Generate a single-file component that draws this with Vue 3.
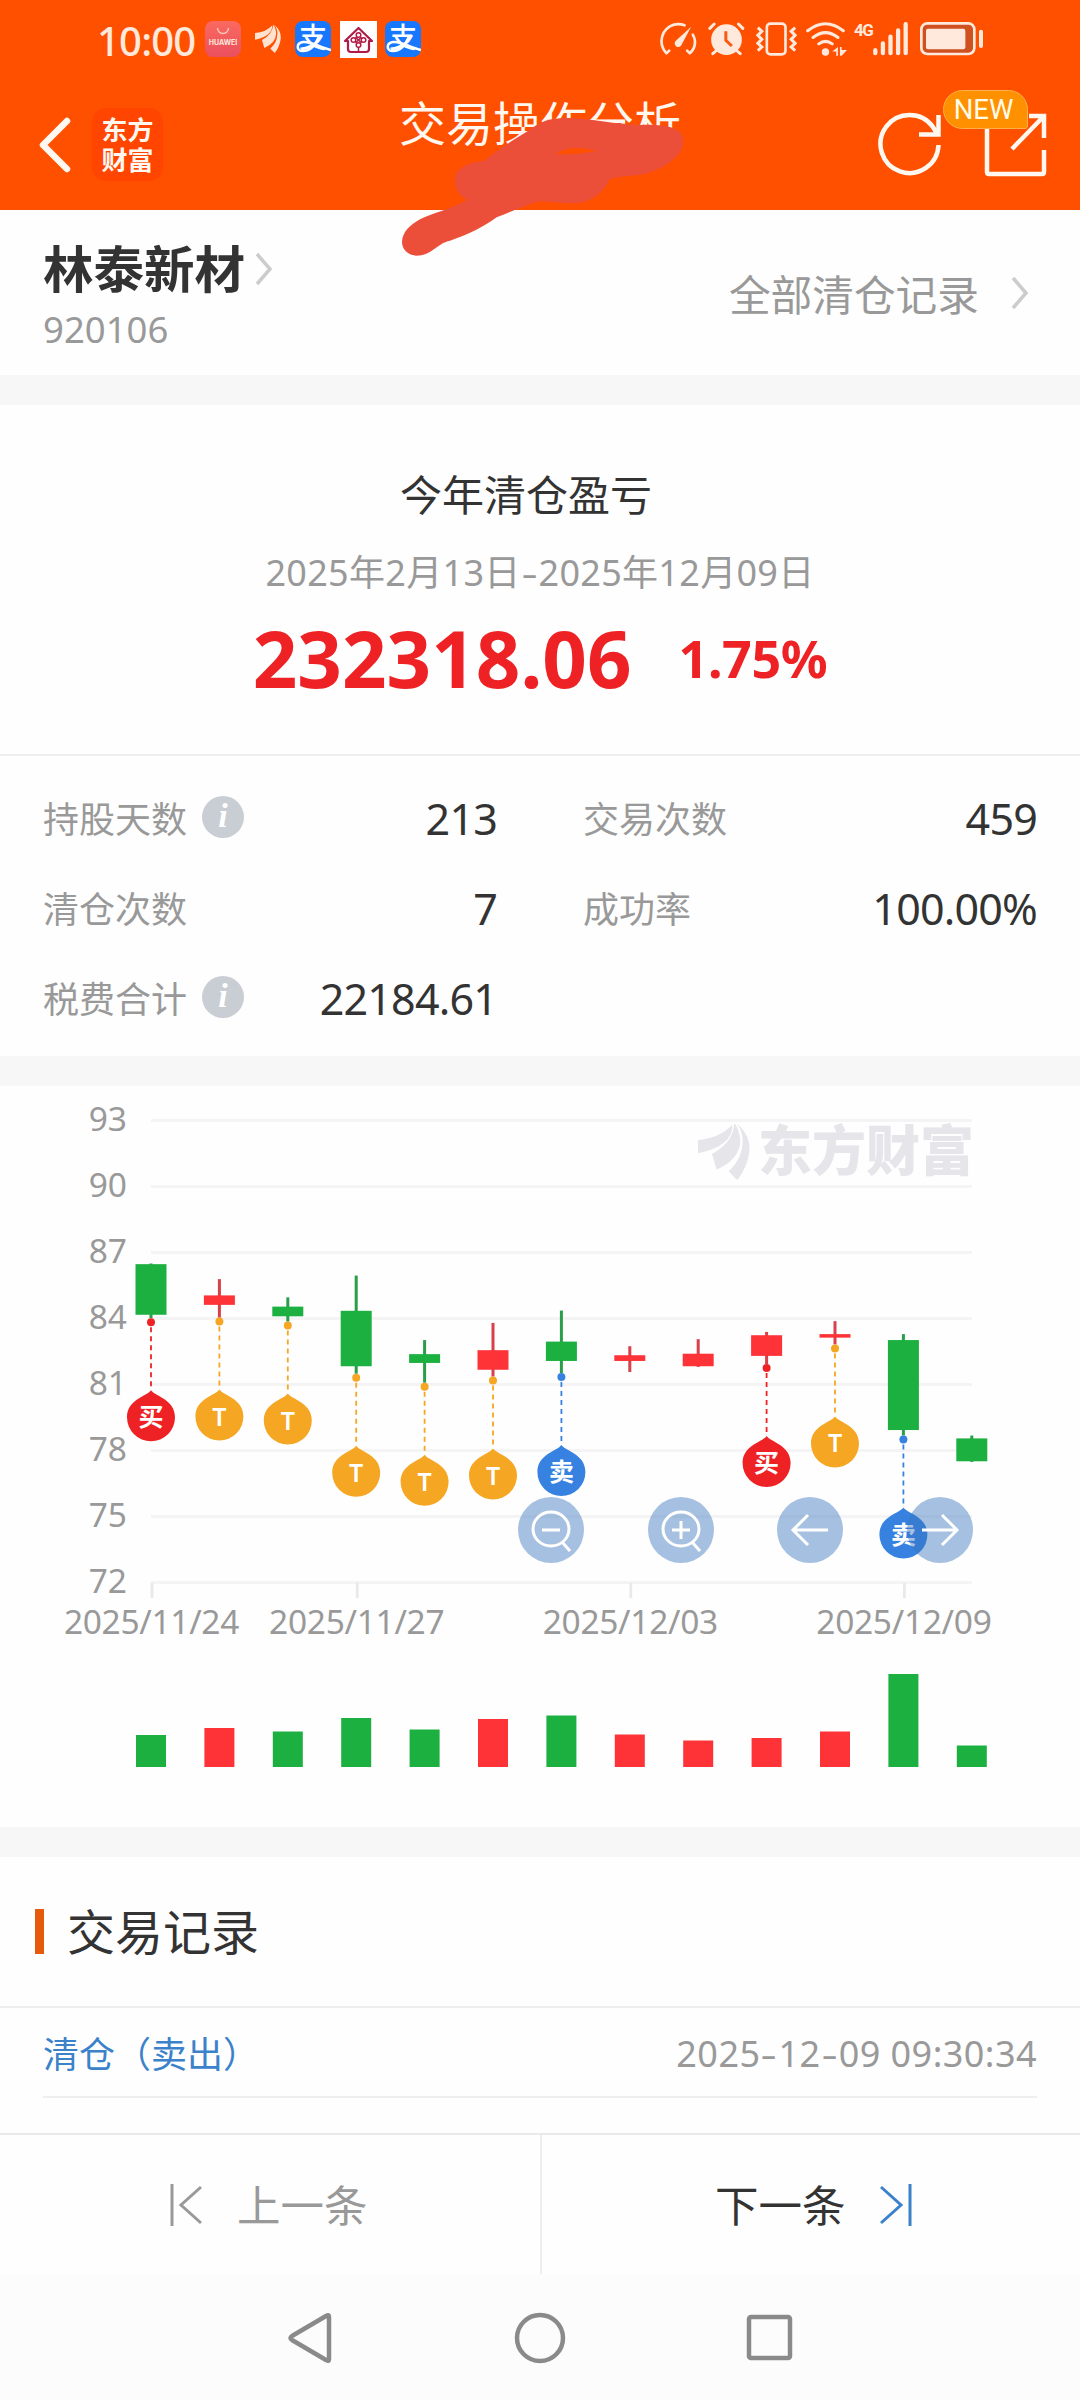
<script setup>
import { ref } from "vue";

const stats = ref([
  { label: "持股天数", value: "213", info: true },
  { label: "交易次数", value: "459" },
  { label: "清仓次数", value: "7" },
  { label: "成功率", value: "100.00%" },
  { label: "税费合计", value: "22184.61", info: true },
]);

// mark: B = buy, S = sell, T = both on one day
const days = ref([
  { open: 86.47, close: 84.17, high: 86.5, low: 84.01, vol: 32, mark: "B", date: "2025/11/24" },
  { open: 84.62, close: 85.05, high: 85.79, low: 84.04, vol: 39, mark: "T" },
  { open: 84.54, close: 84.1, high: 84.96, low: 83.86, vol: 35.5, mark: "T" },
  { open: 84.35, close: 81.83, high: 85.95, low: 81.49, vol: 49, mark: "T", date: "2025/11/27" },
  { open: 82.38, close: 81.98, high: 83.02, low: 81.08, vol: 37.5, mark: "T" },
  { open: 81.67, close: 82.56, high: 83.8, low: 81.36, vol: 48, mark: "T" },
  { open: 82.95, close: 82.07, high: 84.36, low: 81.52, vol: 51.5, mark: "S" },
  { open: 82.07, close: 82.33, high: 82.74, low: 81.57, vol: 32.5, date: "2025/12/03" },
  { open: 81.83, close: 82.4, high: 83.06, low: 81.8, vol: 26.5 },
  { open: 82.3, close: 83.24, high: 83.39, low: 81.93, vol: 29, mark: "B" },
  { open: 83.13, close: 83.29, high: 83.88, low: 82.82, vol: 35.5, mark: "T" },
  { open: 83.02, close: 78.93, high: 83.29, low: 78.68, vol: 93, mark: "S", date: "2025/12/09" },
  { open: 78.55, close: 77.51, high: 78.68, low: 77.48, vol: 21.5 },
]);

const ticks = [93, 90, 87, 84, 81, 78, 75, 72];
const marks = {
  B: { text: "买", color: "#ee2225" },
  S: { text: "卖", color: "#3782e0" },
  T: { text: "T", color: "#f5a623" },
};

const xOf = (i) => 151 + i * 68.4;
const yOf = (price) => 34.5 + (93 - price) * 22;
const colorOf = (d) => (d.close >= d.open ? "#fd3338" : "#1bb040");
const dotOf = (d) => yOf(d.low) + 4;
</script>

<template>
  <div class="page">
    <header class="header">
      <div class="status">
        <span class="clock">10:00</span>
        <span class="app huawei">
          <svg viewBox="0 0 36 10" width="36" height="10">
            <path d="M12.500 0a5.500 5.500 0 0 0 11 0" fill="none" stroke="#ffc9b8" stroke-width="1.400" />
          </svg>
          HUAWEI
        </span>
        <svg class="feather" viewBox="24 37 156 173" width="26" height="30">
          <path d="M24 88Q90 82 127 42Q130 105 24 128Z" />
          <path d="M133 38Q130 96 66 130L80 177Q150 145 151 90Q148 55 133 38Z" />
          <path d="M139 38Q184 75 178 125Q170 175 142 208L116 182Q162 140 158 80Q154 55 139 38Z" />
        </svg>
        <span class="app alipay">
          支
          <svg viewBox="0 0 36 36" width="36" height="36">
            <path d="M24 15C20 26 14 30 8 30C1 30 1 22 8 21C16 20 24 26 36 29" />
          </svg>
        </span>
        <svg class="house" viewBox="0 0 37 37" width="37" height="37">
          <rect width="37" height="37" fill="#fff" />
          <g fill="none" stroke="#b01b45" stroke-width="2.200" stroke-linejoin="round">
            <path d="M5 20L18.500 7L32 20H29V28Q29 31 26 31H11Q8 31 8 28V20Z" />
            <g stroke-width="1.500">
              <circle cx="18.500" cy="14" r="2.300" />
              <circle cx="18.500" cy="24" r="2.300" />
              <circle cx="13.500" cy="19" r="2.300" />
              <circle cx="23.500" cy="19" r="2.300" />
              <path d="M15.500 16l6 6M21.500 16l-6 6M18.500 26v5" />
            </g>
          </g>
        </svg>
        <span class="app alipay">
          支
          <svg viewBox="0 0 36 36" width="36" height="36">
            <path d="M24 15C20 26 14 30 8 30C1 30 1 22 8 21C16 20 24 26 36 29" />
          </svg>
        </span>
        <div class="system">
          <svg viewBox="33 38 110 102" width="37" height="34">
            <g fill="none" stroke="#ffe9dc" stroke-width="8" stroke-linecap="round" stroke-linejoin="round">
              <path d="M60 124L52 132Q37 116 37 95Q38 66 62 51Q84 39 106 48" />
              <path d="M114 124L122 132Q140 115 137 93Q136 85 131 76" />
            </g>
            <path d="M126 52L98 105A11 11 0 1 1 80 94Z" fill="#ffe9dc" />
          </svg>
          <svg viewBox="176 38 110 102" width="37" height="34">
            <g stroke="#ffe9dc" stroke-width="9" stroke-linecap="round">
              <path d="M181 57L194 44M280 57L267 44M199 125L190 133M263 125L272 133" />
            </g>
            <circle cx="231" cy="91" r="46" fill="#ffe9dc" />
            <path d="M229 66V93L247 110" fill="none" stroke="#f95a14" stroke-width="9" />
          </svg>
          <svg viewBox="317 38 122 102" width="41" height="34">
            <g fill="none" stroke="#ffe9dc" stroke-width="8">
              <rect x="349" y="43" width="56" height="92" rx="11" />
              <path stroke-width="9" d="M322 55L334 66L322 78L334 90L322 102L334 113L322 124M434 55L422 66L434 78L422 90L434 102L422 113L434 124" />
            </g>
          </svg>
          <svg class="wifi" viewBox="466 36 122 104" width="41" height="35">
            <g fill="none" stroke="#ffe9dc" stroke-width="9" stroke-linecap="round">
              <path d="M471 62Q524 20 577 62M487 82Q524 53 561 82M504 101Q524 86 544 101" />
            </g>
            <circle cx="524" cy="125" r="11" fill="#ffe9dc" />
            <path d="M544 124L561 110V136H556V124ZM567 110H572V119H588L572 136H567Z" fill="#ffe9dc" />
          </svg>
          <span class="net">4G</span>
          <svg viewBox="666 36 106 102" width="35" height="34">
            <path
              d="M673 121V130M696 100V130M719 80V130M742 61V130M765 42V130"
              stroke="#ffe9dc"
              stroke-width="13"
              stroke-linecap="round"
            />
          </svg>
          <svg class="battery" viewBox="810 38 192 102" width="64" height="34">
            <rect x="814" y="42" width="159" height="92" rx="18" fill="#cf5120" stroke="#ffe9dc" stroke-width="8" />
            <rect x="828" y="58" width="118" height="62" rx="6" fill="#ffe9dc" />
            <path d="M993 67V110" stroke="#ffe9dc" stroke-width="12" stroke-linecap="round" />
          </svg>
        </div>
      </div>

      <div class="navbar">
        <svg class="back" viewBox="0 0 34 56" width="34" height="56">
          <path d="M29 4L5 28L29 52" fill="none" stroke="#fff8f0" stroke-width="6.500" stroke-linecap="round" stroke-linejoin="round" />
        </svg>
        <div class="logo">东方<br />财富</div>
        <h1 class="title">交易操作分析</h1>
        <div class="actions">
          <svg viewBox="0 0 66 66" width="66" height="66">
            <g fill="none" stroke="#fff8f0" stroke-width="4.500">
              <path d="M60.500 34A29 29 0 1 1 55 16L60 24" />
              <path d="M60.500 4V23.500H41" />
            </g>
          </svg>
          <svg viewBox="0 0 66 66" width="66" height="66">
            <g fill="none" stroke="#fff8f0" stroke-width="4.500">
              <path d="M61 39V61Q61 63 59 63H6Q4 63 4 61V5H40" />
              <path d="M46 5H61V27M60 6L29 38" />
            </g>
          </svg>
          <span class="badge">NEW</span>
        </div>
      </div>

      <!-- marker stroke drawn over the title -->
      <svg class="scribble" viewBox="0 0 960 570" width="320" height="190">
        <path
          fill="#ec4f39"
          fill-rule="evenodd"
          d="M66 485C68 455 90 435 120 418C160 398 200 392 262 360C235 345 222 320 225 295C230 262 265 248 312 243C350 212 380 192 440 155C490 118 520 112 580 115C640 118 700 132 780 135C850 132 912 140 910 185C905 235 850 265 790 283C750 290 720 288 690 297C670 335 640 365 590 370C550 370 510 366 475 364C430 380 390 395 350 412C310 440 270 462 210 482C170 490 155 527 110 527C80 525 66 505 66 485ZM527 222Q556 203 590 204Q620 205 650 212Q590 225 527 222Z"
        />
      </svg>
    </header>

    <section class="stock">
      <div>
        <div class="stock-name">
          林泰新材
          <svg viewBox="0 0 18 34" width="18" height="34"><path d="M2 2L15 17L2 32" /></svg>
        </div>
        <div class="stock-code">920106</div>
      </div>
      <div class="all-records">
        全部清仓记录
        <svg viewBox="0 0 18 34" width="18" height="34"><path d="M2 2L15 17L2 32" /></svg>
      </div>
    </section>

    <section class="profit">
      <h2>今年清仓盈亏</h2>
      <p class="range">2025年2月13日<span class="dash">-</span>2025年12月09日</p>
      <p class="amount"><b>232318.06</b><b class="rate">1.75%</b></p>
    </section>

    <section class="stats">
      <div v-for="s in stats" :key="s.label" class="stat">
        <span class="stat-label">{{ s.label }}</span>
        <span v-if="s.info" class="info">i</span>
        <span class="stat-value">{{ s.value }}</span>
      </div>
    </section>

    <section class="chart">
      <svg viewBox="0 0 1080 741" width="1080" height="741">
        <g v-for="(t, i) in ticks" :key="t">
          <line x1="151" x2="972" :y1="yOf(t)" :y2="yOf(t)" stroke="#f4f4f4" stroke-width="2.800" />
          <text class="axis" x="127" :y="45 + i * 66" text-anchor="end">{{ t }}</text>
        </g>

        <!-- watermark -->
        <g fill="#e5e5ea">
          <g transform="translate(698 37) scale(.333)">
            <path d="M0 51Q66 45 103 5Q106 68 0 91Z" />
            <path d="M109 1Q106 59 42 93L56 140Q126 108 127 53Q124 18 109 1Z" />
            <path d="M115 1Q160 38 154 88Q146 138 118 171L92 145Q138 103 134 43Q130 18 115 1Z" />
          </g>
          <text class="watermark" x="758" y="85">东方财富</text>
        </g>

        <g v-for="(d, i) in days" :key="i">
          <template v-if="d.date">
            <line :x1="xOf(i) + 1" :x2="xOf(i) + 1" y1="497" y2="512" stroke="#e9e9e9" stroke-width="2.800" />
            <text class="axis date" :x="xOf(i) + 0.5" y="548" text-anchor="middle">{{ d.date }}</text>
          </template>
          <rect
            :x="xOf(i) - 1.5"
            :y="yOf(d.high)"
            width="3"
            :height="yOf(d.low) - yOf(d.high)"
            :fill="d.close >= d.open ? '#d8404a' : '#2a9f4a'"
          />
          <rect
            :x="xOf(i) - 15.5"
            :y="yOf(Math.max(d.open, d.close))"
            width="31"
            :height="Math.abs(d.open - d.close) * 22"
            :fill="colorOf(d)"
          />
          <rect :x="xOf(i) - 15" :y="681 - d.vol" width="30" :height="d.vol" :fill="colorOf(d)" />
        </g>

        <g v-for="(d, i) in days" :key="'m' + i">
          <g v-if="d.mark" :transform="`translate(${xOf(i)} ${dotOf(d)})`">
            <circle r="4" :fill="marks[d.mark].color" />
            <line y1="5" y2="68" :stroke="marks[d.mark].color" stroke-width="1.800" stroke-dasharray="5 4" />
            <path d="M0 68C4 74 24 77 24 95A24 24 0 0 1 -24 95C-24 77 -4 74 0 68Z" :fill="marks[d.mark].color" />
            <text class="pin" y="104" text-anchor="middle">{{ marks[d.mark].text }}</text>
          </g>
        </g>
      </svg>

      <div class="tools">
        <span class="tool">
          <svg viewBox="0 0 66 66" width="66" height="66"><path d="M51 32A18 17 0 1 1 15 32A18 17 0 1 1 51 32M44 45L52 54M24 33H42" /></svg>
        </span>
        <span class="tool">
          <svg viewBox="0 0 66 66" width="66" height="66"><path d="M51 32A18 17 0 1 1 15 32A18 17 0 1 1 51 32M44 45L52 54M24 33H42M33 24V42" /></svg>
        </span>
        <span class="tool">
          <svg viewBox="0 0 66 66" width="66" height="66"><path d="M51 33H16M31 18L16 33L31 48" /></svg>
        </span>
        <span class="tool">
          <svg viewBox="0 0 66 66" width="66" height="66"><path d="M15 33H50M35 18L50 33L35 48" /></svg>
        </span>
      </div>
    </section>

    <section class="records">
      <h3>交易记录</h3>
      <div class="record">
        <span>清仓（卖出）</span>
        <time>2025<span class="dash">-</span>12<span class="dash">-</span>09 09:30:34</time>
      </div>
    </section>

    <div class="pager">
      <div class="prev">
        <svg viewBox="0 0 32 42" width="32" height="42"><path d="M2 0V42M31 3L11 21L31 39" /></svg>
        上一条
      </div>
      <div class="next">
        下一条
        <svg viewBox="0 0 32 42" width="32" height="42"><path d="M30 0V42M1 3L21 21L1 39" /></svg>
      </div>
    </div>

    <nav class="sysnav">
      <svg viewBox="0 0 50 54" width="50" height="54"><path d="M43 6V48Q43 51 40 49L6 29Q3 27 6 25L40 5Q43 3 43 6Z" /></svg>
      <svg viewBox="0 0 54 54" width="54" height="54"><circle cx="27" cy="27" r="23" /></svg>
      <svg viewBox="0 0 50 54" width="50" height="54"><rect x="5" y="6" width="41" height="41" rx="2" /></svg>
    </nav>
  </div>
</template>

<style>
body {
  background: #fff;
}
</style>

<style scoped>
.page {
  width: 1080px;
  height: 2400px;
  display: flex;
  flex-direction: column;
  background: #fefefe;
  color: #333;
  font-family: "Noto Sans", "Noto Sans CJK SC", sans-serif;
  overflow: hidden;
}

h1,
h2,
h3,
p {
  margin: 0;
  font-weight: 400;
}

svg {
  flex: none;
}

.header {
  position: relative;
  height: 210px;
  flex: none;
  background: #ff5000;
}

.status {
  display: flex;
  align-items: center;
  height: 78px;
  padding: 0 96px 0 97px;
  color: #ffe9dc;
}

.clock {
  width: 108px;
  padding-top: 3px;
  font-size: 40px;
  font-weight: 500;
  line-height: 75px;
  letter-spacing: -0.8px;
  white-space: nowrap;
}

.app {
  width: 36px;
  height: 36px;
  border-radius: 8px;
  flex: none;
}

.huawei {
  display: flex;
  flex-direction: column;
  align-items: center;
  padding-top: 7px;
  box-sizing: border-box;
  background: linear-gradient(#fb6a60, #ea4f5e);
  font: 700 7px/10px Inter, sans-serif;
}

.feather {
  margin: 0 14px;
  fill: #ffe3d0;
}

.alipay {
  position: relative;
  background: #1777ff;
  color: #fff;
  text-align: center;
  font: 500 28px/31px "Noto Sans CJK SC", sans-serif;
}

.alipay svg {
  position: absolute;
  left: 0;
  top: 0;
  fill: none;
  stroke: #fff;
  stroke-width: 2.5;
}

.house {
  margin: 0 8px 0 9px;
}

.system {
  display: flex;
  align-items: center;
  margin-left: auto;
}

.system svg + svg {
  margin-left: 11px;
}

.system svg.wifi {
  margin-left: 9px;
}

.system .net {
  margin: -18px 0 0 7px;
  width: 19px;
  font: 700 17px/18px "Roboto", sans-serif;
  letter-spacing: -1.5px;
}

.system svg.battery {
  margin-left: 12px;
}

.navbar {
  display: flex;
  height: 132px;
  padding: 0 31px 0 38px;
}

.back {
  margin-top: 39px;
}

.logo {
  width: 71px;
  height: 73px;
  margin: 30px 0 0 20px;
  padding-top: 6px;
  box-sizing: border-box;
  border-radius: 14px;
  background: #ff4500;
  color: #fff8f0;
  text-align: center;
  font: 700 26px/30px "Noto Sans CJK SC", sans-serif;
}

.title {
  margin: 13px 0 0 236px;
  color: #fff8f0;
  font-size: 47px;
  line-height: 64px;
  white-space: nowrap;
}

.actions {
  position: relative;
  display: flex;
  gap: 39px;
  margin: 33px 0 0 auto;
}

.badge {
  position: absolute;
  left: 65px;
  top: -21px;
  width: 85px;
  height: 39px;
  box-sizing: border-box;
  padding-right: 4px;
  border: 1.5px solid #ffb04a;
  border-radius: 20px 20px 3px 20px;
  background: #ff9100;
  color: #fffbe6;
  text-align: center;
  font: 400 27.5px/38px Roboto, sans-serif;
}

.scribble {
  position: absolute;
  left: 380px;
  top: 80px;
}

.stock {
  display: flex;
  justify-content: space-between;
  height: 165px;
  flex: none;
  box-sizing: border-box;
  padding: 29px 51px 0 43px;
}

.stock svg path {
  fill: none;
  stroke: #ccc;
  stroke-width: 3.5;
}

.stock-name {
  display: flex;
  align-items: center;
  gap: 10px;
  font-size: 50.5px;
  font-weight: 700;
  line-height: 60px;
}

.stock-code {
  color: #999;
  font-size: 36.5px;
  line-height: 60px;
}

.all-records {
  display: flex;
  align-items: center;
  gap: 32px;
  height: 107px;
  color: #999;
  font-size: 41.7px;
}

.profit {
  display: flex;
  flex-direction: column;
  align-items: center;
  height: 381px;
  flex: none;
  box-sizing: border-box;
  border-top: 30px solid #f7f7f7;
  border-bottom: 2px solid #eee;
}

.profit h2 {
  margin-top: 60px;
  padding-right: 28px;
  font-size: 42px;
  line-height: 60px;
}

.range {
  margin-top: 27px;
  color: #999;
  font-size: 36px;
  letter-spacing: 0.3px;
  line-height: 42px;
}

.dash {
  display: inline-block;
  transform: scaleX(1.4);
  margin: 0 3px;
}

.amount {
  display: flex;
  align-items: center;
  gap: 47px;
  margin-top: 19px;
  color: #ee2225;
  font-size: 78px;
  line-height: 90px;
}

.rate {
  font-size: 52px;
  letter-spacing: -0.4px;
}

.stats {
  display: grid;
  grid-template-columns: 454px 454px;
  column-gap: 86px;
  grid-auto-rows: 90px;
  height: 300px;
  flex: none;
  box-sizing: border-box;
  padding: 17px 43px 0;
  color: #333;
}

.stat {
  display: flex;
  align-items: center;
}

.stat-label {
  margin-top: -2px;
  color: #999;
  font-size: 36px;
}

.info {
  width: 42px;
  height: 42px;
  margin: -2px 0 0 15px;
  border-radius: 50%;
  background: #c9cdd4;
  color: #fff;
  text-align: center;
  font: italic 700 34px/40px "Liberation Serif", serif;
}

.stat-value {
  margin: 2px 0 0 auto;
  font-size: 43px;
  letter-spacing: -0.8px;
  line-height: 60px;
}

.chart {
  position: relative;
  height: 771px;
  flex: none;
  box-sizing: border-box;
  border-top: 30px solid #f7f7f7;
}

.chart > svg {
  display: block;
}

.axis {
  fill: #999;
  font-size: 33.5px;
}

.axis.date {
  letter-spacing: -0.3px;
}

.watermark {
  font: 900 54px "Noto Sans CJK SC", sans-serif;
}

.pin {
  fill: #fff;
  font: 600 25px "Noto Sans", "Noto Sans CJK SC", sans-serif;
}

.tools {
  position: absolute;
  left: 518px;
  top: 411px;
  display: flex;
  gap: 63.5px;
}

.tool {
  width: 66px;
  height: 66px;
  border-radius: 50%;
  background: rgba(57, 117, 190, 0.45);
}

.tool path {
  fill: none;
  stroke: #fff;
  stroke-width: 3;
}

.records {
  height: 306px;
  flex: none;
  box-sizing: border-box;
  border-top: 30px solid #f7f7f7;
}

.records h3 {
  display: flex;
  align-items: center;
  gap: 23px;
  height: 149px;
  padding-left: 35px;
  border-bottom: 2px solid #eee;
  font-size: 48px;
  line-height: 145px;
}

.records h3::before {
  content: "";
  width: 9px;
  height: 45px;
  background: #e55a0c;
}

.record {
  display: flex;
  align-items: center;
  justify-content: space-between;
  height: 88px;
  margin: 0 43px;
  border-bottom: 2px solid #eee;
  color: #3b82ca;
  font-size: 36px;
}

.record time {
  padding-top: 2px;
  color: #999;
  letter-spacing: 0.45px;
}

.pager {
  display: flex;
  height: 141px;
  flex: none;
  box-sizing: border-box;
  border-top: 2px solid #eaeaea;
  font-size: 43.5px;
}

.pager > div {
  display: flex;
  align-items: center;
  width: 542px;
  box-sizing: border-box;
  line-height: 60px;
}

.pager path {
  fill: none;
  stroke: currentColor;
  stroke-width: 3;
}

.prev {
  gap: 35px;
  padding-left: 170px;
  border-right: 2px solid #eee;
  color: #999;
}

.pager > .next {
  gap: 34px;
  width: 538px;
  padding-left: 173px;
}

.next svg {
  color: #3b82ca;
}

.sysnav {
  display: flex;
  justify-content: center;
  align-items: center;
  gap: 177px;
  flex: 1;
  padding-top: 1px;
  background: #fcfcfc;
}

.sysnav svg {
  fill: none;
  stroke: #8a8a8a;
  stroke-width: 4.5;
}
</style>
